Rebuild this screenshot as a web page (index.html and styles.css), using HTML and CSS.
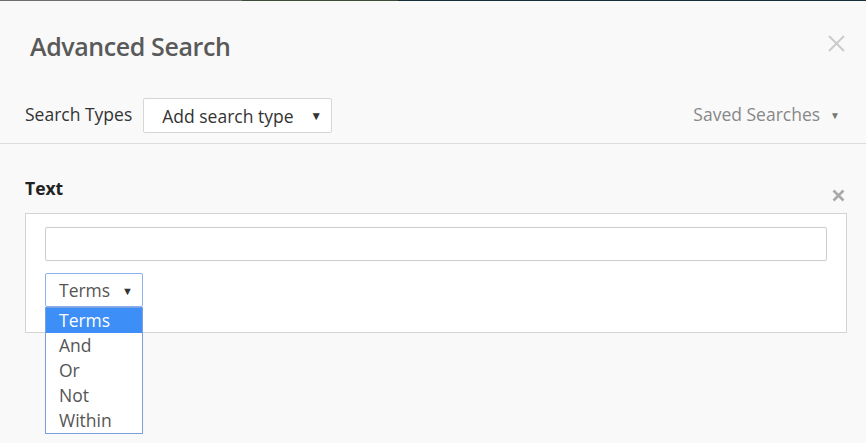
FILE: index.html
```html
<!DOCTYPE html>
<html lang="en">
<head>
    <meta charset="UTF-8">
    <title>Advanced Search</title>
    <link rel="stylesheet" href="styles.css">
</head>
<body>
    <div class="backdrop-strip"></div>

    <div class="modal">
        <!-- header -->
        <div class="modal-head">
            <h1>Advanced Search</h1>
            <button class="close" type="button" aria-label="Close">
                <svg width="17" height="17" viewBox="0 0 17 17"><path d="M1 1L16 16M16 1L1 16" stroke="#cbcbcb" stroke-width="2" fill="none"/></svg>
            </button>
        </div>

        <!-- search types row -->
        <div class="toolbar">
            <span class="toolbar-label">Search Types</span>
            <div class="select-box">
                <span>Add search type</span>
                <span class="caret">&#9660;</span>
            </div>
            <div class="saved">Saved Searches<span class="caret caret-light">&#9660;</span></div>
        </div>

        <!-- text criteria -->
        <div class="group">
            <div class="group-head">
                <h2>Text</h2>
                <button class="remove" type="button" aria-label="Remove">
                    <svg width="13" height="13" viewBox="0 0 13 13"><path d="M1.5 1.5L11.5 11.5M11.5 1.5L1.5 11.5" stroke="#a9a9a9" stroke-width="2.6" fill="none"/></svg>
                </button>
            </div>
            <div class="group-box">
                <div class="text-input"></div>
                <div class="dropdown">
                    <div class="dropdown-value">
                        <span>Terms</span>
                        <span class="caret">&#9660;</span>
                    </div>
                    <ul class="options">
                        <li class="selected">Terms</li>
                        <li>And</li>
                        <li>Or</li>
                        <li>Not</li>
                        <li>Within</li>
                    </ul>
                </div>
            </div>
        </div>
    </div>
</body>
</html>
```

FILE: styles.css
```css
* {
    margin: 0;
    padding: 0;
    box-sizing: border-box;
    font-family: "Open Sans", Arial, sans-serif;
}

body {
    background: #f9f9f9;
    height: 443px;
    overflow: hidden;
}

.backdrop-strip {
    height: 1px;
    background: linear-gradient(to right, #6e6e6e 0 28%, #3d4a35 28% 46%, #12303a 46% 100%);
}

/* header */
.modal-head {
    display: flex;
    justify-content: space-between;
    align-items: flex-start;
    padding: 29px 21px 0 30px;
}

.modal-head h1 {
    font-size: 25px;
    font-weight: 600;
    line-height: 32px;
    letter-spacing: -0.4px;
    color: #595959;
}

button {
    background: none;
    border: none;
    cursor: pointer;
    display: flex;
}

.close {
    margin-top: 5px;
}

/* search types */
.toolbar {
    display: flex;
    align-items: center;
    margin-top: 36px;
    padding: 0 26px 10px 25px;
    border-bottom: 1px solid #dcdcdc;
    font-size: 17.5px;
}

.toolbar-label {
    color: #333;
    margin-right: 11px;
    padding-bottom: 4px;
}

.select-box {
    display: flex;
    align-items: center;
    justify-content: space-between;
    width: 189px;
    height: 35px;
    padding: 0 9px 0 18px;
    background: #fff;
    border: 1px solid #d6d6d6;
    border-radius: 2px;
    color: #333;
}

.caret {
    font-size: 12px;
    color: #333;
}

.saved {
    display: flex;
    align-items: center;
    margin-left: auto;
    padding-bottom: 4px;
    color: #888;
}

.caret-light {
    font-size: 10px;
    color: #777;
    margin-left: 10px;
    padding-top: 3px;
}

/* text group */
.group {
    padding: 32px 19px 0 25px;
}

.group-head {
    display: flex;
    justify-content: space-between;
    align-items: flex-end;
}

.group-head h2 {
    font-size: 17.5px;
    font-weight: 700;
    line-height: 24px;
    color: #222;
}

.remove {
    margin-right: 2px;
    margin-bottom: -2px;
}

.group-box {
    margin-top: 13px;
    height: 120px;
    padding: 13px 19px 0 19px;
    background: #fff;
    border: 1px solid #d3d3d3;
}

.text-input {
    height: 34px;
    border: 1px solid #ccc;
    border-radius: 2px;
    background: #fff;
}

.dropdown {
    position: relative;
    width: 98px;
    margin-top: 12px;
    font-size: 17.5px;
}

.dropdown-value {
    display: flex;
    align-items: center;
    justify-content: space-between;
    height: 34px;
    padding: 0 9px 0 13px;
    border: 1px solid #8cb0ee;
    border-radius: 2px;
    background: #fff;
    color: #555;
}

.dropdown-value .caret {
    font-size: 11px;
}

.options {
    position: absolute;
    top: 34px;
    left: 0;
    width: 98px;
    list-style: none;
    background: #fff;
    border: 1px solid #7b9edc;
}

.options li {
    height: 25px;
    line-height: 25px;
    padding-left: 13px;
    color: #555;
}

.options li.selected {
    background: #3d8ef7;
    color: #fff;
}
```
